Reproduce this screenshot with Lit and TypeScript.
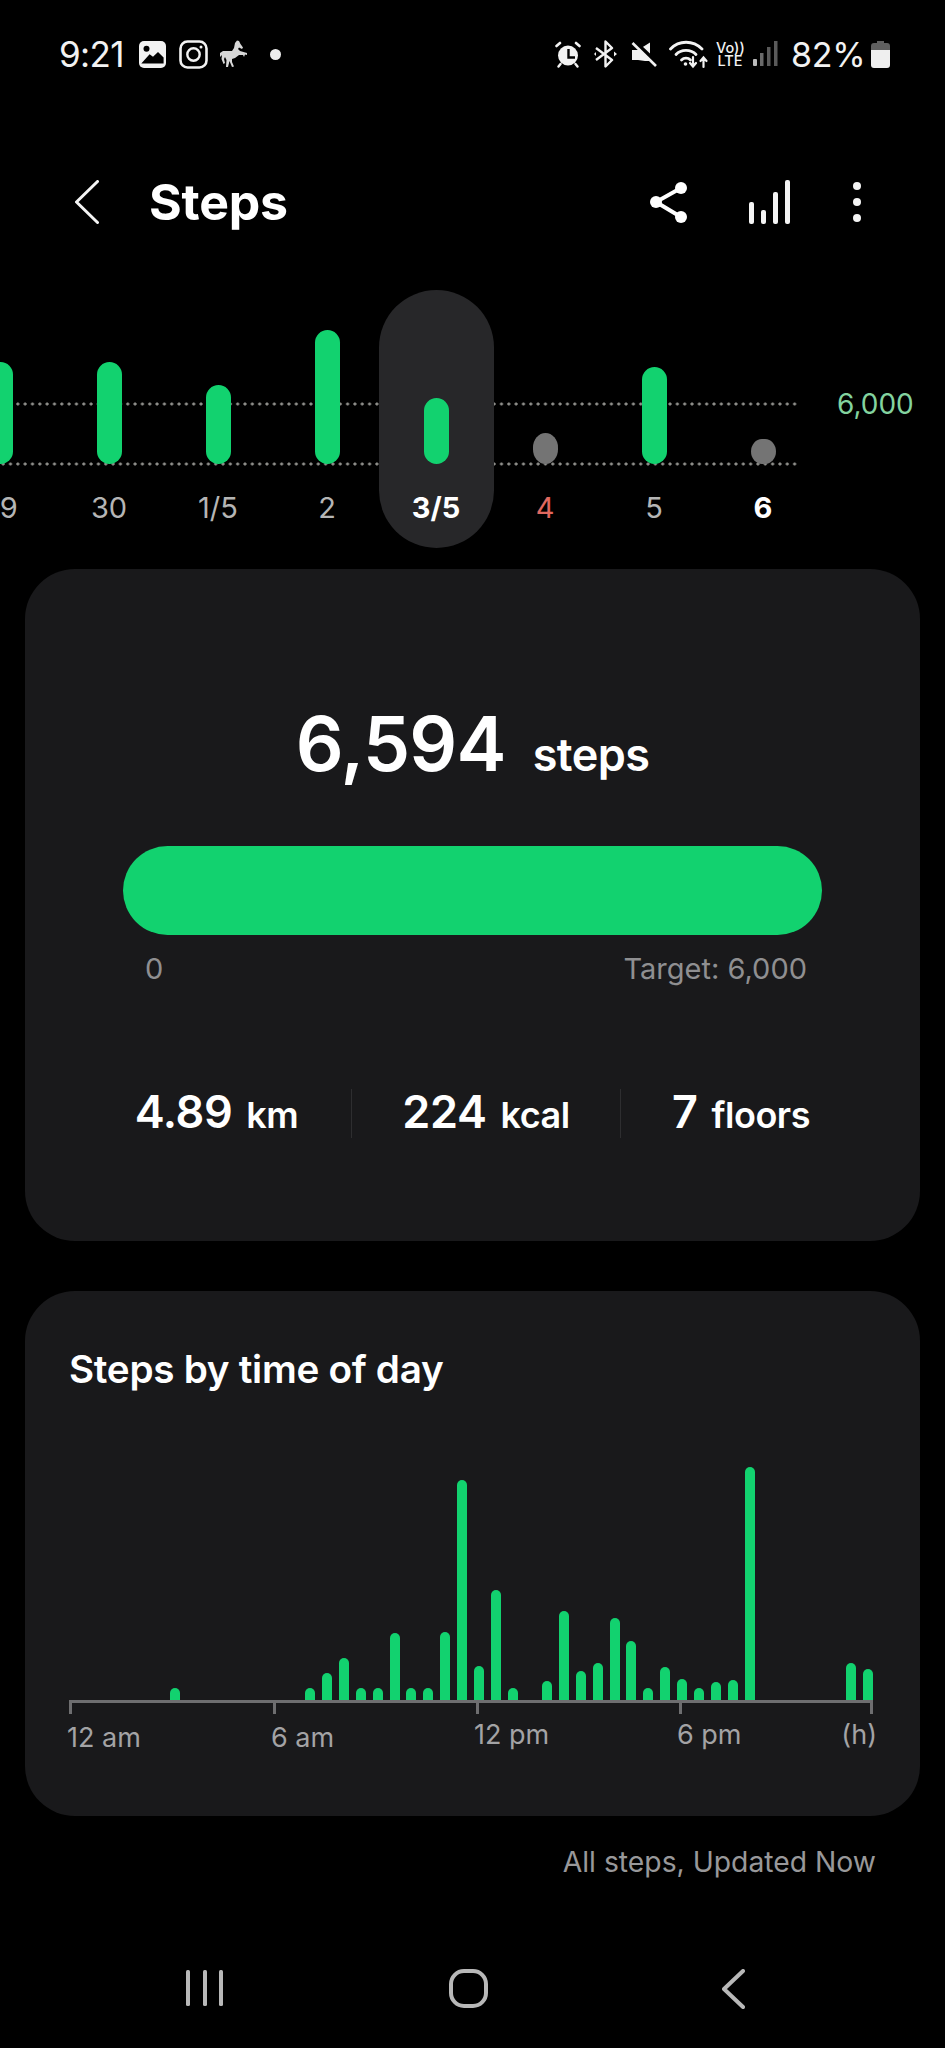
import { LitElement, html, css } from "lit";
import { customElement } from "lit/decorators.js";

const DAYS = [
  { label: "29", top: 72, kind: "" },
  { label: "30", top: 72, kind: "" },
  { label: "1/5", top: 95, kind: "" },
  { label: "2", top: 40, kind: "" },
  { label: "3/5", top: 108, kind: "sel" },
  { label: "4", top: 143, kind: "miss red" },
  { label: "5", top: 77, kind: "" },
  { label: "6", top: 149, kind: "miss today" },
];

const HOURLY: Record<number, number> = {
  6: 14, 14: 14, 15: 29, 16: 44, 17: 14, 18: 14, 19: 69, 20: 14, 21: 14, 22: 70, 23: 222,
  24: 36, 25: 112, 26: 14, 28: 21, 29: 91, 30: 31, 31: 39, 32: 84, 33: 61, 34: 14, 35: 35,
  36: 23, 37: 14, 38: 20, 39: 22, 40: 235, 46: 39, 47: 33,
};

const slots = Array.from({ length: 48 }, (_, i) => HOURLY[i] ?? 0);

@customElement("app-root")
export class AppRoot extends LitElement {
  static styles = css`
    :host {
      display: block;
      width: 945px;
      height: 2048px;
      background: #000;
      overflow: hidden;
      font-family: Inter, "Noto Sans", sans-serif;
      color: #fff;
    }
    .page { display: flex; flex-direction: column; height: 2048px; }
    svg { display: block; flex: none; }

    .status { height: 108px; display: flex; align-items: center; padding-left: 59px; color: #f2f2f2; flex: none; }
    .time { font-size: 35px; font-weight: 400; width: 80px; letter-spacing: -0.6px; }
    .m-ig { margin-left: 13px; }
    .m-horse { margin-left: 11px; }
    .m-dot { margin-left: 22px; }
    .m-alarm { margin-left: 274px; }
    .m-bt { margin-left: 12px; }
    .m-mute { margin-left: 13px; }
    .m-wifi { margin-left: 12px; }
    .volte { margin-left: 7px; width: 28px; font-size: 14.5px; line-height: 13px; font-weight: 500; text-align: center; }
    .volte span { display: block; white-space: nowrap; }
    .m-sig { margin-left: 9px; }
    .pct { margin-left: 13px; font-size: 34px; font-weight: 400; width: 78px; letter-spacing: -0.3px; white-space: nowrap; }
    .m-bat { margin-left: 2px; }

    .header { display: flex; align-items: center; height: 44px; padding: 72px 0 66px 75px; flex: none; }
    .title { font-size: 50px; font-weight: 700; margin-left: 50px; line-height: 44px; letter-spacing: -0.2px; }
    .m-share { margin-left: 362px; }
    .m-stats { margin-left: 61px; }
    .m-more { margin-left: 63px; }

    .days { display: flex; height: 258px; flex: none; }
    .plot { position: relative; width: 799px; height: 258px; overflow: hidden; flex: none; }
    .dotline {
      position: absolute; left: 0; right: 0; height: 4px;
      background: radial-gradient(circle, #8e8e8a 1.2px, transparent 1.9px) -0.5px 0 / 7.33px 4px repeat-x;
    }
    .goal { top: 112px; }
    .base { top: 172px; }
    .cols { position: relative; display: flex; margin-left: -54.5px; height: 258px; }
    .col { position: relative; width: 109px; flex: none; display: flex; flex-direction: column; align-items: center; }
    .col.sel::before {
      content: ""; position: absolute; top: 0; bottom: 0; left: -3px; right: -3px;
      background: #272729; border-radius: 58px;
    }
    .area { position: relative; height: 174px; width: 100%; display: flex; justify-content: center; align-items: flex-end; }
    .bar { width: 25px; background: #12d26f; border-radius: 13px; }
    .col.miss .bar { background: #747474; border-radius: 13px / 15px; }
    .lab { position: relative; margin-top: 24px; font-size: 29px; line-height: 40px; color: #b5b5b5; }
    .col.sel .lab, .col.today .lab { color: #fff; font-weight: 700; }
    .col.red .lab { color: #e0685f; }
    .target { margin-left: 38px; padding-top: 94px; font-size: 28px; line-height: 40px; color: #83d39f; }

    .card { margin: 0 25px; background: #19191b; border-radius: 50px; flex: none; }
    .summary { margin-top: 21px; height: 672px; box-sizing: border-box; padding-top: 137px; }
    .headline { display: flex; justify-content: center; align-items: baseline; gap: 27px; line-height: 76px; }
    .big { font-size: 75px; font-weight: 600; letter-spacing: -0.8px; }
    .unit { font-size: 45px; font-weight: 600; letter-spacing: -0.6px; }
    .progress { margin: 53px 98px 0; height: 89px; background: #12d26f; border-radius: 45px; }
    .scale { display: flex; justify-content: space-between; margin: 17px 113px 0 120px; font-size: 29px; line-height: 34px; color: #8f8f91; }
    .stats { display: grid; grid-template-columns: 269px 269px 241px; margin: 103px 0 0 57px; }
    .stat { display: flex; justify-content: center; align-items: baseline; gap: 14px; line-height: 46px; border-left: 1px solid #2e2e30; }
    .stat:first-child { border-left: none; }
    .stat b { font-size: 45px; font-weight: 600; letter-spacing: -0.4px; }
    .stat span { font-size: 36px; font-weight: 600; letter-spacing: -0.5px; }

    .daily { margin-top: 50px; height: 525px; box-sizing: border-box; padding: 56px 0 0 44px; }
    .daily h2 { margin: 0; font-size: 38.7px; line-height: 44px; font-weight: 600; letter-spacing: -0.3px; }
    .hours { width: 806px; margin: 76px 0 0 -1px; height: 233px; display: flex; justify-content: space-between; align-items: flex-end; }
    .hour { width: 10px; background: #12d26f; border-radius: 5px 5px 0 0; }
    .ticks { width: 804px; display: grid; grid-template-columns: 204px 203px 203px 194px; border-top: 3px solid #6e6e70; }
    .tick { height: 11px; border-left: 3px solid #6e6e70; }
    .tick.last { border-right: 3px solid #6e6e70; }
    .axis { width: 810px; margin: 6px 0 0 -2px; display: grid; grid-template-columns: 204px 203px 203px 200px; font-size: 27px; line-height: 36px; color: #a3a3a5; }
    .axis .pm { margin-top: -3px; }
    .axis .h { display: flex; justify-content: space-between; }

    .note { margin-top: 28px; padding-right: 69px; text-align: right; font-size: 28.3px; line-height: 36px; color: #98989a; flex: none; }

    .nav { margin-top: auto; height: 79px; display: flex; align-items: flex-start; flex: none; color: #b8b8b8; padding-left: 186px; }
    .m-home { margin-left: 226px; }
    .m-back { margin-left: 234px; }
  `;

  private status() {
    return html`<div class="status">
      <div class="time">9:21</div>
      <svg width="27" height="27" viewBox="0 0 27 27"><rect width="27" height="27" rx="5" fill="#f2f2f2"/><circle cx="7.5" cy="7.8" r="3" fill="#000"/><path d="M2.3 22.6 L10.6 13.3 L14 15.8 L19 11 L24.6 16.6 V22.6 Z" fill="#000"/></svg>
      <svg class="m-ig" width="29" height="29" viewBox="0 0 29 29" fill="none" stroke="#f2f2f2"><rect x="1.5" y="1.5" width="26" height="26" rx="7" stroke-width="2.6"/><circle cx="14.5" cy="14.5" r="6.2" stroke-width="2.4"/><circle cx="22" cy="7" r="1.5" fill="#f2f2f2" stroke="none"/></svg>
      <svg class="m-horse" width="29" height="28" viewBox="0 0 29 28"><path fill="#d8d8d8" d="M18 .5 L20 1 L21.5 4 L24 7.5 L23 9 L20 7.5 L19 9 L21 11 L28 13 L28 15 L26 14.5 L25 17 L24 15 L20 15 L16 18 L13 19 L13 22 L15 26.5 L13 27 L10.5 21 L9 27 L7 27 L7.5 20 L6 17 L5 19 L6 23 L4.5 24 L2.5 19 L3 15 L1 17 L1 13 L4 11 L13 11 L15 8 L16 3 Z"/></svg>
      <svg class="m-dot" width="11" height="11" viewBox="0 0 11 11"><circle cx="5.5" cy="5.5" r="5.5" fill="#eee"/></svg>

      <svg class="m-alarm" width="26" height="27" viewBox="0 0 26 27" fill="#f2f2f2"><circle cx="13" cy="14.5" r="10"/><path d="M1.5 5 L5 2 M21 2 L24.5 5" stroke="#f2f2f2" stroke-width="2.6" stroke-linecap="round"/><path d="M5.5 23 L3.5 25.5 M20.5 23 L22.5 25.5" stroke="#f2f2f2" stroke-width="2.4" stroke-linecap="round"/><path d="M13.5 8 V16.5 H20" fill="none" stroke="#000" stroke-width="2.4"/></svg>
      <svg class="m-bt" width="25" height="28" viewBox="0 0 25 28" fill="none" stroke="#f2f2f2" stroke-width="2.4" stroke-linejoin="round"><path d="M3 8 L19 20 L12.5 26.5 V1.5 L19 8 L3 20"/><path d="M21 11.5 L24 14 L21 16.5 Z M3 12 L1 14 L3 16 Z" fill="#f2f2f2" stroke="none"/></svg>
      <svg class="m-mute" width="26" height="25" viewBox="0 0 26 25"><path fill="#f2f2f2" d="M1 8 H7 L19 .5 V19 H14 L7 18 H1 Z"/><path d="M3 -1 L27 22" stroke="#000" stroke-width="4"/><path d="M1.5 1 L25 24" stroke="#f2f2f2" stroke-width="2.6"/></svg>
      <svg class="m-wifi" width="40" height="29" viewBox="0 0 40 29" fill="none" stroke="#f2f2f2" stroke-linecap="round" stroke-width="2.8"><path d="M1.5 9 C10 0 24 0 33 9"/><path d="M7 14.5 C12 9 22 9 27 14.5"/><path d="M12.5 20 C15 17.5 19 17.5 21.5 20"/><circle cx="16.5" cy="24" r="1.8" fill="#f2f2f2" stroke="none"/><path d="M24 17 V26 M21 23 L24 26.5 L27 23 M34.5 27 V18 M31.5 21 L34.5 17.5 L37.5 21" stroke-width="2.2"/></svg>
      <div class="volte"><span>Vo))</span><span>LTE</span></div>
      <svg class="m-sig" width="25" height="26" viewBox="0 0 25 26"><rect x="0" y="18" width="4" height="7" rx="1" fill="#bbb"/><rect x="7" y="12" width="3.5" height="13" fill="#6a6a6a"/><rect x="14" y="6" width="3.5" height="19" fill="#5a5a5a"/><rect x="21" y="0" width="3.5" height="25" fill="#5a5a5a"/></svg>
      <div class="pct">82%</div>
      <svg class="m-bat" width="19" height="27" viewBox="0 0 19 27"><path fill="#5f5f5f" d="M6 0 H13 V2 H16 Q19 2 19 5 V9 H0 V5 Q0 2 3 2 H6 Z"/><path fill="#efefef" d="M0 9 H19 V24 Q19 27 16 27 H3 Q0 27 0 24 Z"/></svg>
    </div>`;
  }

  private header() {
    return html`<div class="header">
      <svg width="24" height="44" viewBox="0 0 24 44" fill="none" stroke="#f4f4f4" stroke-width="3" stroke-linecap="round" stroke-linejoin="round"><path d="M22.5 1.5 L1.5 22 L22.5 42.5"/></svg>
      <div class="title">Steps</div>
      <svg class="m-share" width="38" height="42" viewBox="0 0 38 42"><path d="M31 7 L6 21 L31 36" fill="none" stroke="#fff" stroke-width="4"/><circle cx="31" cy="7" r="6" fill="#fff"/><circle cx="6" cy="21" r="6" fill="#fff"/><circle cx="31" cy="36" r="6" fill="#fff"/></svg>
      <svg class="m-stats" width="41" height="44" viewBox="0 0 41 44" fill="#f4f4f4"><rect x="0" y="22" width="5" height="22" rx="2"/><rect x="12" y="30" width="5" height="14" rx="2"/><rect x="24" y="12" width="5" height="32" rx="2"/><rect x="36" y="0" width="5" height="44" rx="2"/></svg>
      <svg class="m-more" width="8" height="40" viewBox="0 0 8 40" fill="#f4f4f4"><circle cx="4" cy="4" r="4"/><circle cx="4" cy="20" r="4"/><circle cx="4" cy="36" r="4"/></svg>
    </div>`;
  }

  private days() {
    return html`<div class="days">
      <div class="plot">
        <div class="dotline goal"></div>
        <div class="dotline base"></div>
        <div class="cols">
          ${DAYS.map(
            (d) => html`<div class="col ${d.kind}">
              <div class="area"><div class="bar" style="height:${174 - d.top}px"></div></div>
              <div class="lab">${d.label}</div>
            </div>`
          )}
        </div>
      </div>
      <div class="target">6,000</div>
    </div>`;
  }

  private summary() {
    return html`<section class="card summary">
      <div class="headline"><span class="big">6,594</span><span class="unit">steps</span></div>
      <div class="progress"></div>
      <div class="scale"><span>0</span><span>Target: 6,000</span></div>
      <div class="stats">
        <div class="stat"><b>4.89</b><span>km</span></div>
        <div class="stat"><b>224</b><span>kcal</span></div>
        <div class="stat"><b>7</b><span>floors</span></div>
      </div>
    </section>`;
  }

  private daily() {
    return html`<section class="card daily">
      <h2>Steps by time of day</h2>
      <div class="hours">
        ${slots.map((h) => html`<div class="hour" style="height:${h ? h - 2 : 0}px"></div>`)}
      </div>
      <div class="ticks">
        <div class="tick"></div><div class="tick"></div><div class="tick"></div><div class="tick last"></div>
      </div>
      <div class="axis">
        <div>12 am</div><div>6 am</div><div class="pm">12 pm</div>
        <div class="pm h"><span>6 pm</span><span>(h)</span></div>
      </div>
    </section>`;
  }

  private nav() {
    return html`<div class="nav">
      <svg width="37" height="38" viewBox="0 0 37 38" fill="currentColor"><rect x="0" y="1" width="4" height="36" rx="1.5"/><rect x="17" y="1" width="4" height="36" rx="1.5"/><rect x="33" y="1" width="4" height="36" rx="1.5"/></svg>
      <svg class="m-home" width="39" height="39" viewBox="0 0 39 39" fill="none" stroke="currentColor" stroke-width="4"><rect x="2" y="2" width="35" height="35" rx="13"/></svg>
      <svg class="m-back" width="23" height="40" viewBox="0 0 23 40" fill="none" stroke="currentColor" stroke-width="4" stroke-linecap="round" stroke-linejoin="round"><path d="M21 2 L2 20 L21 38"/></svg>
    </div>`;
  }

  render() {
    return html`<div class="page">
      ${this.status()} ${this.header()} ${this.days()} ${this.summary()} ${this.daily()}
      <div class="note">All steps, Updated Now</div>
      ${this.nav()}
    </div>`;
  }
}
